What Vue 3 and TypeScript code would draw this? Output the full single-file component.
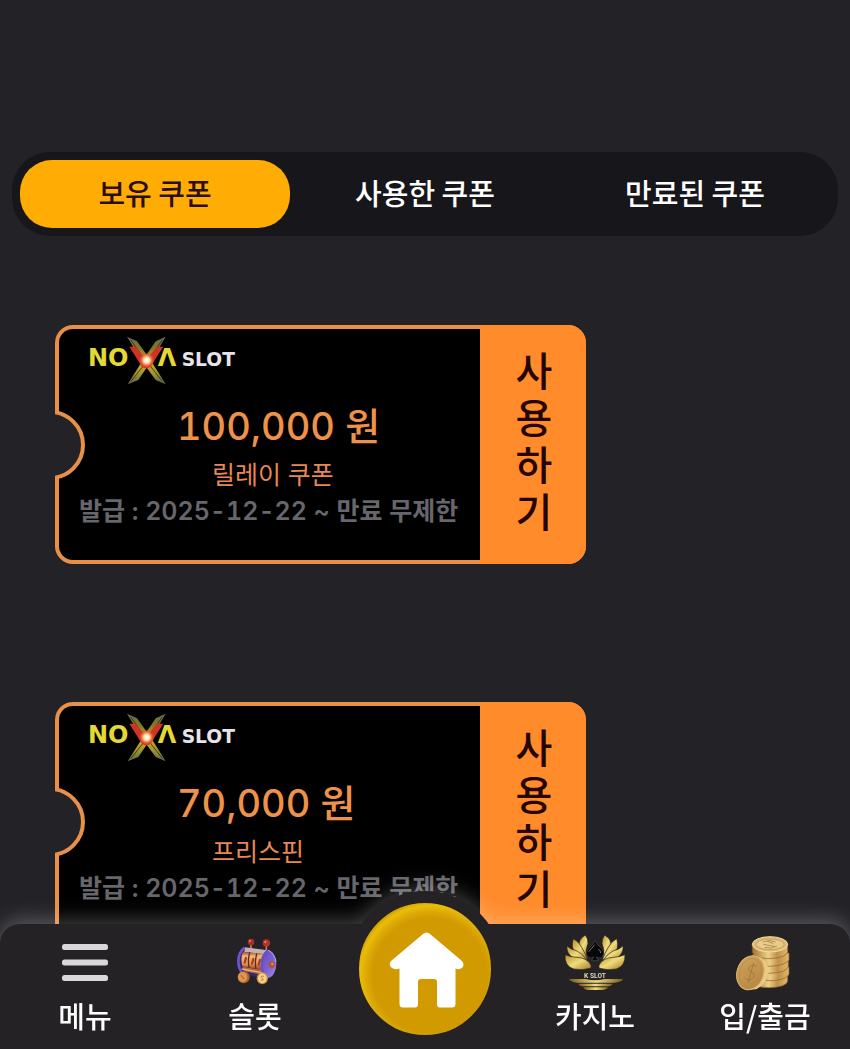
<script setup lang="ts">
import { ref } from 'vue'

interface Coupon {
  id: number
  amount: string
  label: string
  issued: string
  expires: string
}

const tabs: string[] = ['보유 쿠폰', '사용한 쿠폰', '만료된 쿠폰']
const activeTab = ref<number>(0)
const useLetters: string[] = ['사', '용', '하', '기']

const coupons: Coupon[] = [
  { id: 1, amount: '100,000 원', label: '릴레이 쿠폰', issued: '2025-12-22', expires: '만료 무제한' },
  { id: 2, amount: '70,000 원', label: '프리스핀', issued: '2025-12-22', expires: '만료 무제한' },
]
</script>

<template>
  <div class="page">
    <div class="tabs" role="tablist">
      <button
        v-for="(tab, i) in tabs"
        :key="tab"
        type="button"
        role="tab"
        class="tab"
        :class="{ active: activeTab === i }"
        :aria-selected="activeTab === i"
        @click="activeTab = i"
      >
        {{ tab }}
      </button>
    </div>

    <main class="coupons">
      <article v-for="c in coupons" :key="c.id" class="ticket">
        <div class="body">
          <svg class="logo" viewBox="0 0 480 180" role="img" aria-label="NOVA SLOT">
            <defs>
              <linearGradient :id="`streak-${c.id}`" x1="0" y1="0" x2="0" y2="1">
                <stop offset="0" stop-color="#6b6b55" />
                <stop offset="0.25" stop-color="#7f7a22" />
                <stop offset="0.5" stop-color="#e0a030" />
                <stop offset="0.75" stop-color="#a39a2a" />
                <stop offset="1" stop-color="#5f604c" />
              </linearGradient>
              <radialGradient :id="`flare-${c.id}`">
                <stop offset="0" stop-color="#fff" />
                <stop offset="0.35" stop-color="#ffe3b0" />
                <stop offset="0.65" stop-color="#f0703a" stop-opacity="0.8" />
                <stop offset="1" stop-color="#d03020" stop-opacity="0" />
              </radialGradient>
            </defs>
            <g :fill="`url(#streak-${c.id})`">
              <path d="M126 20 L156 34 L198 92 L242 163 L212 150 L174 98 Z" />
              <path d="M242 20 L212 34 L174 90 L128 163 L160 150 L198 94 Z" />
            </g>
            <path d="M137 30 L184 94 M232 30 L186 94 M138 154 L184 96 M232 154 L188 98" stroke="#151508" stroke-width="2" fill="none" />
            <text x="9" y="107" class="logo-gold">NO</text>
            <text x="218" y="107" class="logo-gold">Λ</text>
            <path d="M133 50 L153 50 L183 91 L216 50 L235 50 L196 110 Q184 120 171 110 Z" fill="#cf3327" />
            <circle cx="185" cy="91" r="25" :fill="`url(#flare-${c.id})`" />
            <text x="290" y="107" class="logo-white">SLOT</text>
          </svg>
          <p class="amount">{{ c.amount }}</p>
          <p class="label">{{ c.label }}</p>
          <p class="period">발급 : <time>{{ c.issued }}</time> ~ {{ c.expires }}</p>
        </div>
        <button type="button" class="use" aria-label="사용하기">
          <span v-for="ch in useLetters" :key="ch">{{ ch }}</span>
        </button>
        <span class="notch"></span>
      </article>
    </main>

    <nav class="bar">
      <a href="#menu" class="item">
        <svg class="icon" viewBox="0 0 80 70" aria-hidden="true">
          <g fill="#d9d7da">
            <rect x="17" y="19" width="46" height="6" rx="2.500" />
            <rect x="17" y="34.500" width="46" height="6" rx="2.500" />
            <rect x="17" y="50" width="46" height="6" rx="2.500" />
          </g>
        </svg>
        <span>메뉴</span>
      </a>

      <a href="#slot" class="item">
        <svg class="icon" viewBox="-30 -15 240 210" aria-hidden="true">
          <defs>
            <linearGradient id="reel" x1="0" y1="0" x2="0" y2="1">
              <stop offset="0" stop-color="#8a4a2c" />
              <stop offset="0.25" stop-color="#f3b873" />
              <stop offset="0.65" stop-color="#eb9a52" />
              <stop offset="1" stop-color="#8c4726" />
            </linearGradient>
            <linearGradient id="disc" x1="0" y1="0" x2="1" y2="1">
              <stop offset="0" stop-color="#5a3fb0" />
              <stop offset="0.6" stop-color="#8063d6" />
              <stop offset="1" stop-color="#a48de6" />
            </linearGradient>
          </defs>
          <path d="M78 42 V60 M124 44 V66" stroke="#b9856f" stroke-width="5" />
          <circle cx="78" cy="36" r="10" fill="#ad2c27" />
          <circle cx="124" cy="39" r="11" fill="#b8322b" />
          <circle cx="75" cy="33" r="3" fill="#ee8478" />
          <circle cx="121" cy="36" r="3" fill="#f08c80" />
          <path d="M58 53 L130 61 Q152 80 150 110 Q145 140 124 146 L54 133 Q34 120 36 88 Q40 60 58 53 Z" fill="#3a286f" />
          <ellipse cx="127" cy="102" rx="27" ry="42" fill="url(#disc)" />
          <path d="M60 52 L128 61 L120 73 L58 66 Z" fill="#c9b0ad" />
          <path d="M54 65 L118 72 Q108 92 112 119 L52 109 Q46 84 54 65 Z" fill="url(#reel)" />
          <path d="M52 110 L112 120 L119 136 L58 124 Z" fill="#b5683d" />
          <path d="M50 117 L112 128" stroke="#eeb27a" stroke-width="4" />
          <path d="M74 67 Q68 88 72 113 M95 70 Q89 92 92 116" stroke="#5d2b22" stroke-width="4" fill="none" />
          <path d="M63 84 L59 98 M85 87 L81 101 M105 90 L101 104" stroke="#a8412a" stroke-width="7" stroke-linecap="round" fill="none" />
          <path d="M59 53 Q40 66 40 96 Q42 122 55 132" stroke="#7153cc" stroke-width="8" fill="none" />
          <path d="M128 61 Q108 78 110 108 Q113 132 124 143" stroke="#6a4fc6" stroke-width="7" fill="none" />
          <path d="M129 60 Q150 72 153 96" stroke="#bcaaf2" stroke-width="3" fill="none" />
          <ellipse cx="140" cy="104" rx="9" ry="11" fill="#a95831" />
          <circle cx="142" cy="102" r="4" fill="#df8c48" />
          <ellipse cx="56" cy="142" rx="18" ry="18" fill="#b0642f" />
          <ellipse cx="53" cy="141" rx="14" ry="15" fill="#dd9750" />
          <path d="M47 136 L58 147" stroke="#b87337" stroke-width="4" />
          <ellipse cx="112" cy="145" rx="17" ry="18" fill="#c58a45" />
          <ellipse cx="112" cy="145" rx="13" ry="15" fill="#f4d48c" />
          <path d="M117 139 Q108 136 108 142 Q109 145 115 147 Q116 153 107 151" stroke="#b98746" stroke-width="3" fill="none" />
        </svg>
        <span>슬롯</span>
      </a>

      <a href="#home" class="home" aria-label="홈">
        <svg viewBox="0 0 132 132" aria-hidden="true">
          <path
            d="M64 31 Q67.500 28 71 31 L103 58 Q106 62 103 65 Q100 67 96.500 65.500 V101 Q96.500 104.500 93 104.500 H81 Q78 104.500 78 101 V79 Q78 76 75 76 H62 Q59 76 59 79 V101 Q59 104.500 56 104.500 H44 Q40.500 104.500 40.500 101 V65.500 Q36 67 33 65 Q29 62 32 58 Z"
            fill="#fff"
          />
        </svg>
      </a>

      <a href="#casino" class="item">
        <svg class="icon" viewBox="0 0 240 210" aria-hidden="true">
          <defs>
            <linearGradient id="petal" x1="0" y1="0" x2="1" y2="1">
              <stop offset="0" stop-color="#b98a2c" />
              <stop offset="0.5" stop-color="#f0dc7c" />
              <stop offset="1" stop-color="#a87522" />
            </linearGradient>
            <linearGradient id="base" x1="0" y1="0" x2="1" y2="0">
              <stop offset="0" stop-color="#7b5a1c" />
              <stop offset="0.5" stop-color="#f0df80" />
              <stop offset="1" stop-color="#7b5a1c" />
            </linearGradient>
          </defs>
          <g fill="url(#petal)" stroke="#231f1c" stroke-width="2">
            <path d="M91 30 Q68 44 72 68 Q79 89 97 98 Q89 76 99 56 Q100 42 91 30 Z" />
            <path d="M55 41 Q46 68 62 86 Q80 99 98 105 Q90 82 80 67 Q72 50 55 41 Z" />
            <path d="M36 62 Q33 83 52 97 Q74 108 98 110 Q85 86 66 78 Q46 73 36 62 Z" />
            <path d="M30 89 Q28 123 56 132 Q82 137 106 130 Q111 126 107 119 Q96 99 66 97 Q45 96 30 89 Z" />
            <path d="M149 30 Q172 44 168 68 Q161 89 143 98 Q151 76 141 56 Q140 42 149 30 Z" />
            <path d="M185 41 Q194 68 178 86 Q160 99 142 105 Q150 82 160 67 Q168 50 185 41 Z" />
            <path d="M204 62 Q207 83 188 97 Q166 108 142 110 Q155 86 174 78 Q194 73 204 62 Z" />
            <path d="M210 89 Q212 123 184 132 Q158 137 134 130 Q129 126 133 119 Q144 99 174 97 Q195 96 210 89 Z" />
          </g>
          <path d="M120 47 Q127 61 142 72 Q151 84 143 95 Q135 104 124 96 L130 107 H110 L116 96 Q104 104 96 94 Q89 82 100 71 Q113 61 120 47 Z" fill="#08080a" stroke="#4f4b52" stroke-width="2" />
          <path d="M101 80 Q111 69 119 59 M130 72 Q137 77 137 84" stroke="#77737b" stroke-width="3" fill="none" />
          <text x="120" y="158" class="kslot">K SLOT</text>
          <path d="M42 162 H92 Q120 170 148 162 H204 Q201 172 176 173 H67 Q47 172 42 162 Z" fill="url(#base)" />
          <path d="M70 176 H173 Q170 184 154 184 H88 Q73 184 70 176 Z" fill="url(#base)" />
          <path d="M84 187 H160 Q155 195 144 195 H98 Q87 194 84 187 Z" fill="url(#base)" />
        </svg>
        <span>카지노</span>
      </a>

      <a href="#cash" class="item">
        <svg class="icon" viewBox="0 0 240 210" aria-hidden="true">
          <defs>
            <linearGradient id="edge" x1="0" y1="0" x2="1" y2="0">
              <stop offset="0" stop-color="#a27335" />
              <stop offset="0.45" stop-color="#edcf87" />
              <stop offset="0.7" stop-color="#c0914a" />
              <stop offset="1" stop-color="#e0b869" />
            </linearGradient>
            <linearGradient id="face" x1="0" y1="0" x2="1" y2="1">
              <stop offset="0" stop-color="#d0a55c" />
              <stop offset="1" stop-color="#b48342" />
            </linearGradient>
          </defs>
          <g fill="url(#edge)" stroke="#8b602a" stroke-width="2">
            <path d="M84 150 V170 Q88 188 135 188 Q184 186 188 168 V146 Z" />
            <path d="M88 130 V150 Q96 167 138 167 Q186 165 192 147 V126 Z" />
            <path d="M82 108 V127 Q92 146 136 145 Q184 143 190 124 V104 Z" />
            <path d="M84 86 V105 Q92 123 136 124 Q186 120 192 104 V84 Z" />
            <path d="M82 58 V82 Q92 101 136 101 Q184 98 188 80 V58 Z" />
          </g>
          <ellipse cx="135" cy="58" rx="53" ry="23" fill="#ddbb75" stroke="#f3dda0" stroke-width="3" />
          <ellipse cx="135" cy="58" rx="42" ry="16" fill="#e8cc8b" stroke="#b98f4e" stroke-width="2" />
          <path d="M114 51 Q133 42 152 51 M115 58 L151 65 M119 67 Q137 74 156 63 M126 48 L145 56" stroke="#b98f4e" stroke-width="3" fill="none" />
          <path d="M91 92 Q126 100 131 133 Q132 172 94 193 L64 194 Z" fill="#e8ca83" />
          <ellipse cx="76" cy="143" rx="40" ry="52" transform="rotate(18 76 143)" fill="url(#face)" stroke="#dcb76e" stroke-width="3" />
          <ellipse cx="76" cy="143" rx="32" ry="43" transform="rotate(18 76 143)" fill="none" stroke="#b88b48" stroke-width="2" />
          <path d="M95 123 Q78 116 71 130 Q72 143 86 144 Q92 158 74 165 Q64 166 59 158 M86 114 L69 172" stroke="#a67a3a" stroke-width="3" fill="none" />
        </svg>
        <span>입/출금</span>
      </a>
    </nav>
  </div>
</template>

<style>
body {
  margin: 0;
  background: #232227;
}
</style>

<style scoped>
.page {
  box-sizing: border-box;
  min-height: 100vh;
  padding: 152px 12px 96px;
  background: #232227;
  font-family: Inter, "Noto Sans CJK KR", sans-serif;
}
button {
  border: 0;
  margin: 0;
  font-family: "Noto Sans CJK KR", sans-serif;
  cursor: pointer;
}
.tabs {
  display: grid;
  grid-template-columns: repeat(3, 1fr);
  padding: 8px;
  border-radius: 38px;
  background: #17161b;
}
.tab {
  height: 68px;
  padding: 0 0 5px;
  border-radius: 32px;
  background: transparent;
  color: #fff;
  font-size: 29px;
  font-weight: 500;
}
.tab.active {
  background: #ffad05;
  color: #2b0d05;
}
.coupons {
  display: flex;
  flex-direction: column;
  gap: 138px;
  padding: 89px 43px 0;
}
.ticket {
  position: relative;
  display: flex;
  box-sizing: border-box;
  width: 100%;
  max-width: 531px;
  padding: 4px 0 4px 4px;
  border-radius: 18px;
  overflow: hidden;
  background: #e88f48;
}
.body {
  flex: 1;
  padding: 1px 0 31px 20px;
  border-radius: 14px 0 0 14px;
  background: #000;
}
.logo {
  display: block;
  width: 160px;
  height: 60px;
  margin-left: 6px;
}
.logo-gold {
  font-family: "DejaVu Sans", sans-serif;
  font-size: 72px;
  font-weight: 700;
  fill: #e3d935;
}
.logo-white {
  font-family: "DejaVu Sans", sans-serif;
  font-size: 56px;
  font-weight: 700;
  fill: #e6e4ea;
}
.body p {
  margin: 0;
  white-space: nowrap;
  font-variant-numeric: tabular-nums;
}
.body .amount {
  margin: 10px 0 5px 98px;
  color: #ee9149;
  font-size: 38px;
  font-weight: 500;
  line-height: 52px;
}
.body .label {
  margin-left: 133px;
  color: #e88855;
  font-size: 25px;
  font-weight: 400;
  line-height: 36px;
}
.body .period {
  color: #67666d;
  font-size: 25px;
  font-weight: 600;
  line-height: 36px;
}
.use {
  display: flex;
  flex-direction: column;
  align-items: center;
  justify-content: center;
  gap: 7px;
  flex: 0 0 106px;
  margin: -4px 0;
  padding: 0 0 6px 2px;
  background: #ff8b2b;
  color: #260500;
  font-size: 40px;
  font-weight: 500;
  line-height: 48px;
}
.use span {
  writing-mode: vertical-rl;
}
.notch {
  position: absolute;
  top: 50%;
  left: -40px;
  box-sizing: border-box;
  width: 70px;
  height: 70px;
  margin-top: -35px;
  border: 4px solid #e88f48;
  border-radius: 50%;
  background: #232227;
}
.bar {
  position: fixed;
  right: 0;
  bottom: 0;
  left: 0;
  display: grid;
  grid-template-columns: repeat(5, 1fr);
  padding: 1px 0 14px;
  border-radius: 20px 20px 0 0;
  background: #242224;
  filter: drop-shadow(0 -4px 10px rgba(255, 255, 255, 0.26));
}
.item {
  display: flex;
  flex-direction: column;
  align-items: center;
  color: #fff;
  font-family: "Noto Sans CJK KR", sans-serif;
  font-size: 29px;
  font-weight: 500;
  line-height: 40px;
  text-decoration: none;
}
.icon {
  width: 80px;
  height: 70px;
}
.kslot {
  font-family: Roboto, sans-serif;
  font-size: 20px;
  font-weight: 700;
  text-anchor: middle;
  fill: #ded6bd;
}
.home {
  justify-self: center;
  align-self: start;
  width: 132px;
  height: 132px;
  margin: -34px 0 -21px;
  border: 12px solid #242224;
  border-radius: 50%;
  background: radial-gradient(circle at 54% 55%, #d09a00 56%, #d9a404 61%, #e9bd08 69%, #c99a00 74%);
}
.home svg {
  display: block;
  width: 100%;
  height: 100%;
}
</style>
